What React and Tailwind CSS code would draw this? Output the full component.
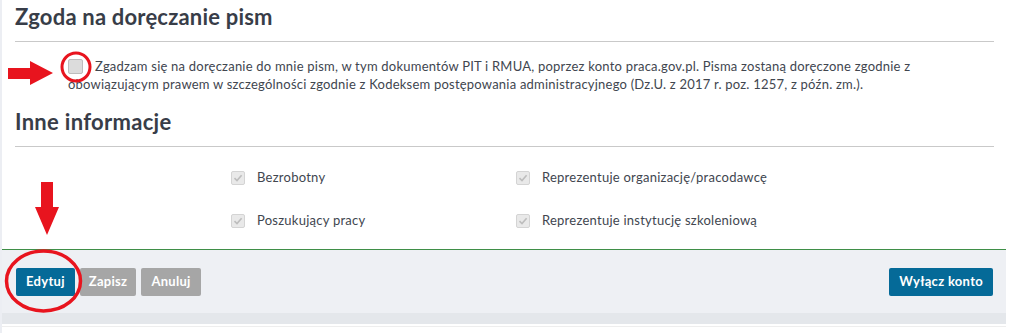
export default function App() {
  const font = { fontFamily: "Lato, 'Open Sans', sans-serif" };
  const items = [
    "Bezrobotny",
    "Reprezentuje organizację/pracodawcę",
    "Poszukujący pracy",
    "Reprezentuje instytucję szkoleniową",
  ];

  return (
    <div className="relative w-[1010px] h-[333px] bg-white flex overflow-hidden" style={font}>
      <div className="w-[2px] bg-[#eceef3]" />
      <div className="w-[1004px] flex flex-col">
        <div className="bg-white pl-[13px] pr-[12px] h-[249px]">
          <h2 className="pt-[2px] pb-[9px] text-[22px] leading-[30px] font-bold tracking-[0.2px] text-[#383d48] border-b border-[#c9c9c9]">
            Zgoda na doręczanie pism
          </h2>
          <p className="mt-[15px] pl-[53px] text-[13px] leading-[18px] tracking-[0.22px] text-[#41464f] pr-[40px]">
            <span className="inline-block w-[15px] h-[15px] mr-[12px] align-[-3px] rounded-[2px] border border-[#bdbdbd] bg-[#dcdcdc]" />
            Zgadzam się na doręczanie do mnie pism, w tym dokumentów PIT i RMUA, poprzez konto praca.gov.pl. Pisma zostaną doręczone zgodnie z obowiązującym prawem w szczególności zgodnie z Kodeksem postępowania administracyjnego (Dz.U. z 2017 r. poz. 1257, z późn. zm.).
          </p>
          <h2 className="mt-[14px] pb-[9px] text-[22px] leading-[30px] font-bold tracking-[0.3px] text-[#383d48] border-b border-[#c9c9c9]">
            Inne informacje
          </h2>
          <div className="mt-[24px] ml-[216px] grid grid-cols-[285px_300px] gap-y-[29px]">
            {items.map((t) => (
              <div key={t} className="flex items-center h-[14px] text-[13px] tracking-[0.25px] text-[#41464f]">
                <span className="w-[14px] h-[14px] mr-[12px] rounded-[2px] border border-[#d4d4d4] bg-[#e9e9e9] flex items-center justify-center">
                  <svg width="10" height="10" viewBox="0 0 10 10">
                    <path d="M1.5 5.2 L4 7.6 L8.6 2.2" fill="none" stroke="#bdbdbd" strokeWidth="1.6" />
                  </svg>
                </span>
                {t}
              </div>
            ))}
          </div>
        </div>
        <div className="border-t border-[#3f8f47] bg-[#eef0f4] h-[64px] pt-[18px] pl-[14px] pr-[13px] flex justify-between">
          <div className="flex gap-[5px]">
            <button className="h-[28px] px-[10px] rounded-[2px] bg-[#056a98] text-white text-[13px] font-bold tracking-[0.3px]">Edytuj</button>
            <button className="h-[28px] px-[9px] rounded-[2px] bg-[#a6a6a6] text-white text-[13px] font-bold tracking-[0.3px]">Zapisz</button>
            <button className="h-[28px] px-[10px] rounded-[2px] bg-[#a6a6a6] text-white text-[13px] font-bold tracking-[0.3px]">Anuluj</button>
          </div>
          <button className="h-[28px] px-[10px] rounded-[2px] bg-[#056a98] text-white text-[13px] font-bold tracking-[0.3px]">Wyłącz konto</button>
        </div>
        <div className="h-[11px] bg-[#e4e7eb]" />
        <div className="mt-[2px] h-[1px] bg-[#eeeeee]" />
      </div>

      <svg className="absolute left-0 top-0 pointer-events-none" width="1010" height="333">
        <circle cx="76" cy="67" r="14" fill="none" stroke="#e8141e" strokeWidth="3" />
        <path d="M8 68 H30 V61 L53 73 L30 85 V79 H8 Z" fill="#e8141e" />
        <path d="M41 182 H53 V207 H59 L47 235 L35 207 H41 Z" fill="#e8141e" />
        <ellipse cx="43.5" cy="281" rx="37" ry="30" fill="none" stroke="#e8141e" strokeWidth="3.5" />
      </svg>
    </div>
  );
}
